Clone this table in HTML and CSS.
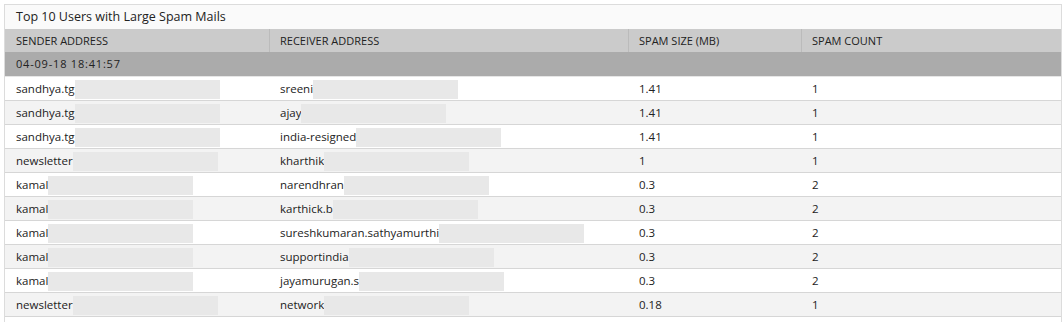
FILE: index.html
```html
<!DOCTYPE html>
<html>
<head>
<meta charset="utf-8">
<link rel="stylesheet" href="styles.css">
</head>
<body>
<div class="panel">
  <div class="title">Top 10 Users with Large Spam Mails</div>
  <div class="row head">
    <div class="cell">SENDER ADDRESS</div>
    <div class="cell div">RECEIVER ADDRESS</div>
    <div class="cell div">SPAM SIZE (MB)</div>
    <div class="cell div">SPAM COUNT</div>
  </div>
  <div class="group">04-09-18 18:41:57</div>
  <div class="rows">
    <div class="row data"><div class="cell"><span>sandhya.tg</span><i class="mask"></i></div><div class="cell"><span>sreeni</span><i class="mask"></i></div><div class="cell">1.41</div><div class="cell">1</div></div>
    <div class="row data"><div class="cell"><span>sandhya.tg</span><i class="mask"></i></div><div class="cell"><span>ajay</span><i class="mask"></i></div><div class="cell">1.41</div><div class="cell">1</div></div>
    <div class="row data"><div class="cell"><span>sandhya.tg</span><i class="mask"></i></div><div class="cell"><span>india-resigned</span><i class="mask"></i></div><div class="cell">1.41</div><div class="cell">1</div></div>
    <div class="row data"><div class="cell"><span>newsletter</span><i class="mask"></i></div><div class="cell"><span>kharthik</span><i class="mask"></i></div><div class="cell">1</div><div class="cell">1</div></div>
    <div class="row data"><div class="cell"><span>kamal</span><i class="mask"></i></div><div class="cell"><span>narendhran</span><i class="mask"></i></div><div class="cell">0.3</div><div class="cell">2</div></div>
    <div class="row data"><div class="cell"><span>kamal</span><i class="mask"></i></div><div class="cell"><span>karthick.b</span><i class="mask"></i></div><div class="cell">0.3</div><div class="cell">2</div></div>
    <div class="row data"><div class="cell"><span>kamal</span><i class="mask"></i></div><div class="cell"><span>sureshkumaran.sathyamurthi</span><i class="mask"></i></div><div class="cell">0.3</div><div class="cell">2</div></div>
    <div class="row data"><div class="cell"><span>kamal</span><i class="mask"></i></div><div class="cell"><span>supportindia</span><i class="mask"></i></div><div class="cell">0.3</div><div class="cell">2</div></div>
    <div class="row data"><div class="cell"><span>kamal</span><i class="mask"></i></div><div class="cell"><span>jayamurugan.s</span><i class="mask"></i></div><div class="cell">0.3</div><div class="cell">2</div></div>
    <div class="row data"><div class="cell"><span>newsletter</span><i class="mask"></i></div><div class="cell"><span>network</span><i class="mask"></i></div><div class="cell">0.18</div><div class="cell">1</div></div>
  </div>
</div>
</body>
</html>
```

FILE: styles.css
```css
html, body {
  margin: 0;
  padding: 0;
  background: #ffffff;
}
body {
  font-family: "Open Sans", "Noto Sans", sans-serif;
  font-size: 11px;
  color: #222222;
}
.panel {
  margin: 4px 2px 0 4px;
  border: 1px solid #dcdcdc;
  border-bottom: none;
  padding-bottom: 8px;
}
.title {
  height: 24px;
  line-height: 23px;
  padding-left: 11px;
  background: #fafafa;
  font-size: 12.5px;
  color: #222222;
}
.row {
  display: grid;
  grid-template-columns: 264px 359px 173px 1fr;
}
.cell {
  display: flex;
  align-items: center;
  padding-left: 11px;
  white-space: nowrap;
}
.head {
  height: 23px;
  background: #cbcbcb;
}
.head .cell.div {
  border-left: 1px solid #bbbbbb;
  padding-left: 10px;
}
.group {
  height: 24px;
  line-height: 23px;
  padding-left: 11px;
  background: #ababab;
  border-bottom: 1px solid #e6e6e6;
  letter-spacing: 0.8px;
}
.data {
  height: 23px;
  border-bottom: 1px solid #d6d6d6;
  background: #ffffff;
  font-size: 11.5px;
}
.data:nth-child(even) {
  background: #f3f3f3;
}
.mask {
  display: block;
  width: 145px;
  height: 19px;
  align-self: flex-start;
  margin-top: 3px;
  background: #e8e8e8;
}
```
